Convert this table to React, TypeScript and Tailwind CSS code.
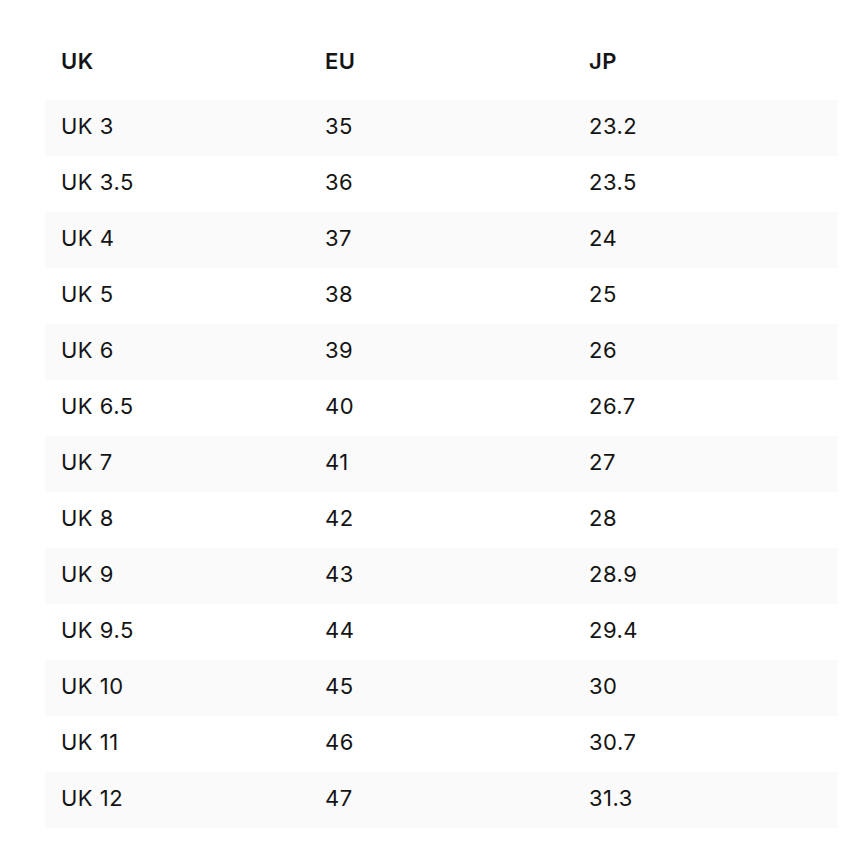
import React from "react";

const rows: [string, string, string][] = [
  ["UK 3", "35", "23.2"],
  ["UK 3.5", "36", "23.5"],
  ["UK 4", "37", "24"],
  ["UK 5", "38", "25"],
  ["UK 6", "39", "26"],
  ["UK 6.5", "40", "26.7"],
  ["UK 7", "41", "27"],
  ["UK 8", "42", "28"],
  ["UK 9", "43", "28.9"],
  ["UK 9.5", "44", "29.4"],
  ["UK 10", "45", "30"],
  ["UK 11", "46", "30.7"],
  ["UK 12", "47", "31.3"],
];

export default function App() {
  return (
    <div className="min-h-[846px] bg-white text-[#141414]" style={{ fontFamily: "Inter, 'Open Sans', sans-serif" }}>
      <div className="ml-[45px] w-[792px] pt-[40px]">
        <div className="grid grid-cols-3 h-[40px] items-center mb-[20px] text-[22px] tracking-[0.5px] font-semibold pt-[2px]">
          <div className="pl-[16px]">UK</div>
          <div className="pl-[16px]">EU</div>
          <div className="pl-[16px]">JP</div>
        </div>
        {rows.map((r, i) => (
          <div
            key={r[0]}
            className={`grid grid-cols-3 h-[56px] items-center pb-[3px] text-[22px] tracking-[0.5px] ${i % 2 === 0 ? "bg-[#fafafa]" : "bg-white"}`}
          >
            <div className="pl-[16px]">{r[0]}</div>
            <div className="pl-[16px]">{r[1]}</div>
            <div className="pl-[16px]">{r[2]}</div>
          </div>
        ))}
      </div>
    </div>
  );
}
